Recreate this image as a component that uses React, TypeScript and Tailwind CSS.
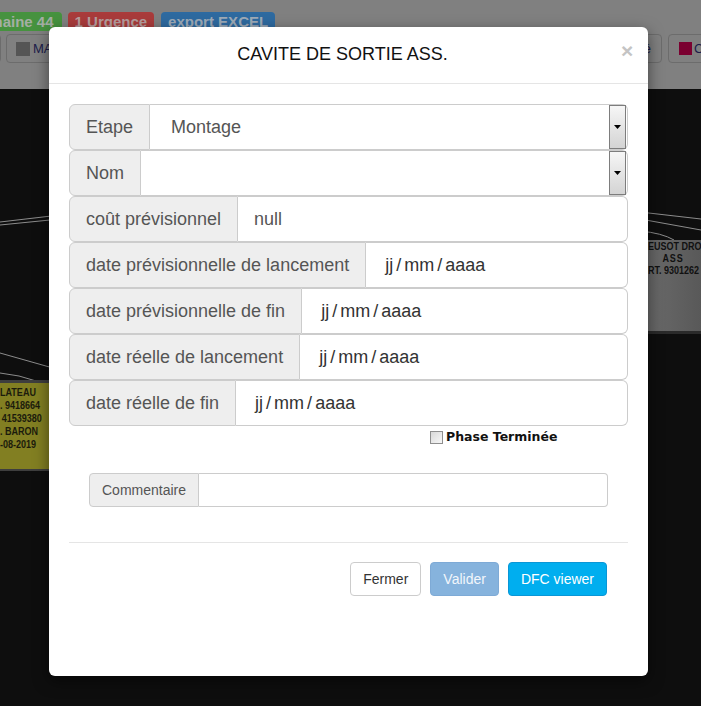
import React from 'react';

const dateRows = [
  'date prévisionnelle de lancement',
  'date prévisionnelle de fin',
  'date réelle de lancement',
  'date réelle de fin',
];

const SelectArrow = () => (
  <div className="w-[17px] h-full border border-[#7d7d7d] bg-gradient-to-b from-[#f6f6f6] to-[#d4d4d4] flex items-center justify-center">
    <svg width="7" height="4" viewBox="0 0 7 4">
      <path d="M0 0 H7 L3.5 4 Z" fill="#000" />
    </svg>
  </div>
);

const Addon = ({ children }: { children: React.ReactNode }) => (
  <div className="flex items-center px-[16px] bg-[#eeeeee] border border-[#cccccc] rounded-l-[6px] text-[18px] text-[#555] whitespace-nowrap">
    {children}
  </div>
);

const DateValue = () => (
  <div className="flex items-center gap-[3px] pl-[19px] text-[18px] text-[#333]">
    <span>jj</span>
    <span>/</span>
    <span>mm</span>
    <span>/</span>
    <span>aaaa</span>
  </div>
);

const Background = () => (
  <div className="flex flex-col w-[701px] h-[706px]">
    <div className="h-[89px] bg-[#808080] flex flex-col">
      <div className="flex items-start pt-[12px] h-[34px]">
        <div className="ml-[-37px] h-[19px] px-[8px] bg-[#46923f] rounded-[4px] text-[15px] font-bold text-[#a4aea4] leading-[19px] whitespace-nowrap">
          Semaine 44
        </div>
        <div className="ml-[6px] h-[19px] px-[7px] bg-[#a93b3b] rounded-[4px] text-[15px] font-bold text-[#b59e9e] leading-[19px] whitespace-nowrap">
          1 Urgence
        </div>
        <div className="ml-[7px] h-[19px] px-[7px] bg-[#2e6aa0] rounded-[4px] text-[15px] font-bold text-[#9eaab7] leading-[19px] whitespace-nowrap">
          export EXCEL
        </div>
      </div>
      <div className="flex items-center h-[29px]">
        <div className="ml-[-39px] w-[40px] h-[29px] border border-[#6c6c6c] rounded-[4px]" />
        <div className="ml-[5px] w-[110px] h-[29px] border border-[#6c6c6c] rounded-[4px] flex items-center gap-[3px] pl-[9px] text-[13px] text-[#1c1c4a]">
          <span className="w-[14px] h-[14px] bg-[#555]" />
          MAGASIN
        </div>
        <div className="flex-1" />
        <div className="w-[90px] h-[29px] border border-[#6c6c6c] rounded-[4px] flex items-center justify-end pr-[10px] text-[13px] text-[#1c1c4a]">
          Planifié
        </div>
        <div className="ml-[6px] mr-[-67px] w-[100px] h-[29px] border border-[#6c6c6c] rounded-[4px] flex items-center gap-[2px] pl-[10px] text-[13px] text-[#1c1c4a]">
          <span className="w-[13px] h-[13px] bg-[#7a0030]" />
          Clôturé
        </div>
      </div>
    </div>
    <div className="relative flex-1 bg-[#0e0e0e]">
      <svg className="absolute inset-0" width="701" height="617" viewBox="0 0 701 617">
        <g stroke="#8c8c8c" strokeWidth="1" fill="none">
          <path d="M0 133 L60 126" />
          <path d="M0 136 L60 130" />
          <path d="M0 264 L60 281" />
          <path d="M0 284 Q20 286 36 292" />
          <path d="M640 123 L701 130" />
          <path d="M640 130 L701 141" />
          <path d="M640 142 Q662 144 674 151" />
        </g>
      </svg>
      <div className="absolute left-[-60px] top-[291px] w-[132px] h-[91px] bg-[#827f22] border-t-[3px] border-b-[2px] border-[#3e3e3e] pt-[3px] pl-[60px]">
        <div className="flex flex-col items-start origin-left scale-x-[0.82] text-[11px] font-bold leading-[13px] text-[#1b1b0c] whitespace-nowrap">
          <span>LATEAU</span>
          <span>. 9418664</span>
          <span className="pl-[2px]">41539380</span>
          <span>. BARON</span>
          <span>-08-2019</span>
        </div>
      </div>
      <div className="absolute left-[611px] top-[151px] w-[124px] h-[94px] bg-gradient-to-r from-[#767676] to-[#4e4e4e] border-b-[3px] border-[#2a2a2a] pt-[1px] pl-[37px]">
        <div className="flex flex-col items-start origin-left scale-x-[0.9] text-[10px] font-bold leading-[12px] text-[#111] whitespace-nowrap">
          <span>EUSOT DROIT</span>
          <span className="pl-[16px] tracking-[1px]">ASS</span>
          <span>RT. 9301262</span>
        </div>
      </div>
    </div>
  </div>
);

export default function App() {
  return (
    <div className="relative w-[701px] h-[706px] overflow-hidden font-['Liberation_Sans',Arial,sans-serif]">
      <Background />

      <div className="absolute left-[49px] top-[27px] w-[599px] h-[649px] bg-white rounded-[6px] shadow-[0_5px_15px_rgba(0,0,0,0.5)] flex flex-col">
        <div className="h-[57px] border-b border-[#e5e5e5] px-[15px] flex items-center">
          <h4 className="flex-1 text-center text-[18px] text-[#111] leading-[1.1]">CAVITE DE SORTIE ASS.</h4>
          <button className="self-start mt-[13px] w-[12px] text-[21px] font-bold leading-none text-[#c4c4c4]">×</button>
        </div>

        <div className="flex flex-col px-[20px] pt-[20px]">
          <div className="flex h-[46px]">
            <Addon>Etape</Addon>
            <div className="flex-1 flex items-stretch border border-l-0 border-[#cccccc] rounded-r-[6px] bg-white">
              <div className="flex-1 flex items-center pl-[21px] text-[18px] text-[#555]">Montage</div>
              <SelectArrow />
              <div className="w-[1px]" />
            </div>
          </div>
          <div className="flex h-[46px]">
            <Addon>Nom</Addon>
            <div className="flex-1 flex items-stretch border border-l-0 border-[#cccccc] rounded-r-[6px] bg-white">
              <div className="flex-1" />
              <SelectArrow />
              <div className="w-[1px]" />
            </div>
          </div>
          <div className="flex h-[46px]">
            <Addon>coût prévisionnel</Addon>
            <div className="flex-1 flex items-center border border-l-0 border-[#cccccc] rounded-r-[6px] bg-white pl-[16px] text-[18px] text-[#555]">
              null
            </div>
          </div>
          {dateRows.map((label) => (
            <div key={label} className="flex h-[46px]">
              <Addon>{label}</Addon>
              <div className="flex-1 flex items-center border border-l-0 border-[#cccccc] rounded-r-[6px] bg-white">
                <DateValue />
              </div>
            </div>
          ))}

          <div className="flex items-center h-[20px] mt-[1px] pl-[361px] gap-[3px]">
            <span className="w-[13px] h-[13px] border border-[#8e8e8e] bg-gradient-to-br from-[#d8d8d8] to-[#f7f7f7]" />
            <span className="font-['DejaVu_Sans',Verdana,sans-serif] text-[12.5px] font-bold text-[#111]">Phase Terminée</span>
          </div>

          <div className="flex h-[34px] mt-[26px] mx-[20px]">
            <div className="flex items-center px-[12px] bg-[#eeeeee] border border-[#cccccc] rounded-l-[4px] text-[14px] text-[#555]">
              Commentaire
            </div>
            <div className="flex-1 border border-l-0 border-[#cccccc] rounded-r-[4px] bg-white" />
          </div>

          <div className="mt-[35px] border-t border-[#e5e5e5]" />

          <div className="flex justify-end mt-[19px] pr-[21px] gap-[9px]">
            <button className="h-[34px] px-[12px] text-[14px] text-[#333] bg-white border border-[#cccccc] rounded-[4px]">Fermer</button>
            <button className="h-[34px] px-[12px] text-[14px] text-[#f2f6fb] bg-[#86b3dd] border border-[#7eaad6] rounded-[4px]">Valider</button>
            <button className="h-[34px] px-[12px] text-[14px] text-white bg-[#00aeef] border border-[#0a96d6] rounded-[4px]">DFC viewer</button>
          </div>
        </div>
      </div>
    </div>
  );
}
